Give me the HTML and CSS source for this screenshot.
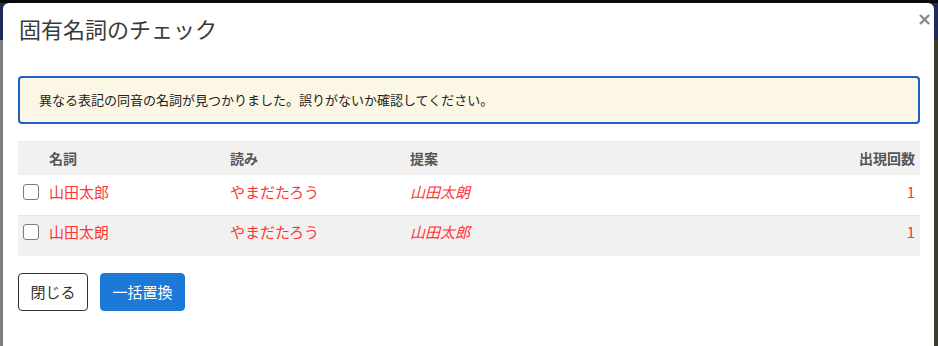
FILE: index.html
```html
<!DOCTYPE html>
<html lang="ja">
<head>
    <meta charset="UTF-8">
    <title>固有名詞のチェック</title>
    <link rel="stylesheet" href="styles.css">
</head>
<body>
    <div class="modal">
        <div class="modal-header">
            <h2 class="modal-title">固有名詞のチェック</h2>
            <button class="close" aria-label="閉じる">&times;</button>
        </div>
        <div class="modal-body">
            <div class="notice">異なる表記の同音の名詞が見つかりました。誤りがないか確認してください。</div>
            <table class="nouns">
                <colgroup>
                    <col class="col-check">
                    <col class="col-name">
                    <col class="col-reading">
                    <col>
                    <col class="col-count">
                </colgroup>
                <thead>
                    <tr>
                        <th></th>
                        <th>名詞</th>
                        <th>読み</th>
                        <th>提案</th>
                        <th class="num">出現回数</th>
                    </tr>
                </thead>
                <tbody>
                    <tr>
                        <td><input type="checkbox"></td>
                        <td>山田太郎</td>
                        <td>やまだたろう</td>
                        <td class="suggest">山田太朗</td>
                        <td class="num">1</td>
                    </tr>
                    <tr>
                        <td><input type="checkbox"></td>
                        <td>山田太朗</td>
                        <td>やまだたろう</td>
                        <td class="suggest">山田太郎</td>
                        <td class="num">1</td>
                    </tr>
                </tbody>
            </table>
            <div class="actions">
                <button class="btn">閉じる</button>
                <button class="btn btn-primary">一括置換</button>
            </div>
        </div>
    </div>
</body>
</html>
```

FILE: styles.css
```css
html, body {
    height: 100%;
}

body {
    margin: 0;
    font-family: "Noto Sans CJK JP", "Noto Sans", sans-serif;
    color: #333;
    background:
        linear-gradient(to bottom, #0a0a0a 3px, transparent 3px),
        linear-gradient(to bottom, #1f2c57 40px, transparent 40px),
        linear-gradient(to right, #7d7d7d 3px, #3a3d2c 3px);
    overflow: hidden;
}

.modal {
    margin: 3px 4px 0 3px;
    height: calc(100% - 3px);
    background: #fff;
    border-radius: 6px 6px 0 0;
    box-sizing: border-box;
}

/* header */
.modal-header {
    display: flex;
    justify-content: space-between;
    align-items: flex-start;
    padding: 10px 2px 0 16px;
}

.modal-title {
    margin: 0;
    font-size: 22px;
    font-weight: normal;
    line-height: 30px;
    color: #3a3a3a;
}

.close {
    border: none;
    background: none;
    padding: 0;
    margin-top: -3px;
    font-family: "DejaVu Sans", sans-serif;
    font-size: 18px;
    font-weight: bold;
    line-height: 18px;
    color: #888;
    cursor: pointer;
}

/* body */
.modal-body {
    padding: 33px 14px 0 15px;
}

.notice {
    border: 2px solid #1d5fc4;
    border-radius: 4px;
    background-color: #fcf6e4;
    padding: 13px 19px;
    font-size: 13px;
    line-height: 18px;
    color: #222;
}

.nouns {
    width: 100%;
    margin-top: 17px;
    border-collapse: collapse;
    table-layout: fixed;
    font-size: 15px;
}

.col-check { width: 31px; }
.col-name { width: 181px; }
.col-reading { width: 180px; }
.col-count { width: 120px; }

.nouns th {
    height: 33px;
    padding: 0;
    background-color: #f1f1f1;
    border-top: 1px solid #ebebeb;
    text-align: left;
    font-size: 14px;
    font-weight: bold;
    color: #555;
    box-sizing: border-box;
}

.nouns td {
    padding: 7px 0 13px;
    line-height: 20px;
    color: #ff3535;
    vertical-align: top;
}

.nouns tbody tr:first-child td {
    border-bottom: 1px solid #e6e6e6;
}

.nouns tbody tr:nth-child(2) td {
    background-color: #f1f1f1;
    padding-top: 6px;
    padding-bottom: 14px;
}

.nouns .num {
    text-align: right;
    padding-right: 5px;
}

.nouns .suggest {
    font-style: italic;
}

.nouns input[type="checkbox"] {
    appearance: none;
    -webkit-appearance: none;
    width: 16px;
    height: 16px;
    margin: 2px 0 0 5px;
    border: 1.5px solid #7b7b7b;
    border-radius: 3px;
    background: #fff;
    box-sizing: border-box;
    display: block;
}

/* buttons */
.actions {
    display: flex;
    gap: 12px;
    margin-top: 17px;
}

.btn {
    height: 38px;
    padding: 0 11.5px;
    font-family: inherit;
    font-size: 15px;
    color: #333;
    background: #fff;
    border: 1px solid #333;
    border-radius: 4px;
    cursor: pointer;
}

.btn-primary {
    background-color: #1c79d7;
    border-color: #1c79d7;
    color: #fff;
}
```
